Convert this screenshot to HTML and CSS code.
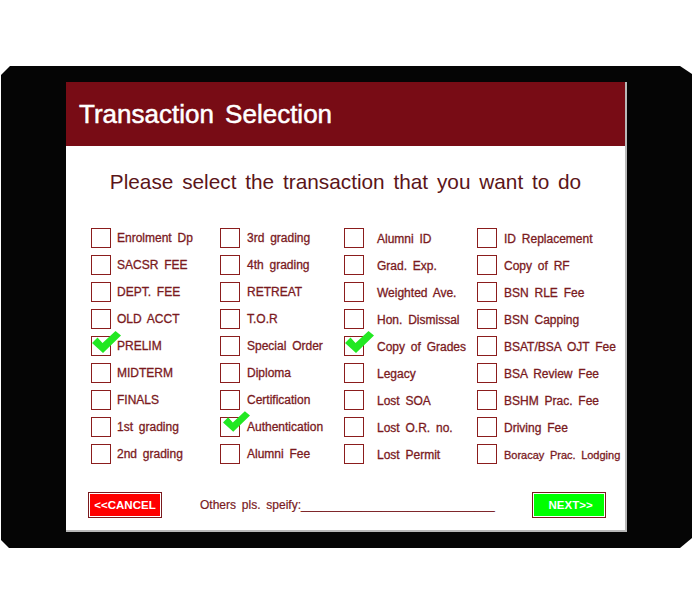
FILE: index.html
```html
<!DOCTYPE html>
<html>
<head>
<meta charset="utf-8">
<link rel="stylesheet" href="styles.css">
</head>
<body>
<div class="frame">
  <div class="panel">
    <div class="header"><h1 class="title">Transaction Selection</h1></div>
    <p class="subtitle">Please select the transaction that you want to do</p>
    <div class="grid">
      <div class="col col1">
        <div class="item"><span class="box"></span><span class="label">Enrolment Dp</span></div>
        <div class="item"><span class="box"></span><span class="label">SACSR FEE</span></div>
        <div class="item"><span class="box"></span><span class="label">DEPT. FEE</span></div>
        <div class="item"><span class="box"></span><span class="label">OLD ACCT</span></div>
        <div class="item"><span class="box checked"><svg class="check" viewBox="0 0 29 22"><polygon points="0,12 5.5,6.5 10.5,12 23.5,0 29,4.5 11,22"/></svg></span><span class="label">PRELIM</span></div>
        <div class="item"><span class="box"></span><span class="label">MIDTERM</span></div>
        <div class="item"><span class="box"></span><span class="label">FINALS</span></div>
        <div class="item"><span class="box"></span><span class="label">1st grading</span></div>
        <div class="item"><span class="box"></span><span class="label">2nd grading</span></div>
      </div>
      <div class="col col2">
        <div class="item"><span class="box"></span><span class="label">3rd grading</span></div>
        <div class="item"><span class="box"></span><span class="label">4th grading</span></div>
        <div class="item"><span class="box"></span><span class="label">RETREAT</span></div>
        <div class="item"><span class="box"></span><span class="label">T.O.R</span></div>
        <div class="item"><span class="box"></span><span class="label">Special Order</span></div>
        <div class="item"><span class="box"></span><span class="label">Diploma</span></div>
        <div class="item"><span class="box"></span><span class="label">Certification</span></div>
        <div class="item"><span class="box checked"><svg class="check check-alt" viewBox="0 0 29 22"><polygon points="0,12 5.5,6.5 10.5,12 23.5,0 29,4.5 11,22"/></svg></span><span class="label">Authentication</span></div>
        <div class="item"><span class="box"></span><span class="label">Alumni Fee</span></div>
      </div>
      <div class="col col3">
        <div class="item"><span class="box"></span><span class="label">Alumni ID</span></div>
        <div class="item"><span class="box"></span><span class="label">Grad. Exp.</span></div>
        <div class="item"><span class="box"></span><span class="label">Weighted Ave.</span></div>
        <div class="item"><span class="box"></span><span class="label">Hon. Dismissal</span></div>
        <div class="item"><span class="box checked"><svg class="check" viewBox="0 0 29 22"><polygon points="0,12 5.5,6.5 10.5,12 23.5,0 29,4.5 11,22"/></svg></span><span class="label">Copy of Grades</span></div>
        <div class="item"><span class="box"></span><span class="label">Legacy</span></div>
        <div class="item"><span class="box"></span><span class="label">Lost SOA</span></div>
        <div class="item"><span class="box"></span><span class="label">Lost O.R. no.</span></div>
        <div class="item"><span class="box"></span><span class="label">Lost Permit</span></div>
      </div>
      <div class="col col4">
        <div class="item"><span class="box"></span><span class="label">ID Replacement</span></div>
        <div class="item"><span class="box"></span><span class="label">Copy of RF</span></div>
        <div class="item"><span class="box"></span><span class="label">BSN RLE Fee</span></div>
        <div class="item"><span class="box"></span><span class="label">BSN Capping</span></div>
        <div class="item"><span class="box"></span><span class="label">BSAT/BSA OJT Fee</span></div>
        <div class="item"><span class="box"></span><span class="label">BSA Review Fee</span></div>
        <div class="item"><span class="box"></span><span class="label">BSHM Prac. Fee</span></div>
        <div class="item"><span class="box"></span><span class="label">Driving Fee</span></div>
        <div class="item"><span class="box"></span><span class="label small">Boracay Prac. Lodging</span></div>
      </div>
    </div>
    <div class="footer">
      <button class="btn btn-cancel">&lt;&lt;CANCEL</button>
      <span class="others">Others pls. speify:_____________________________</span>
      <button class="btn btn-next">NEXT&gt;&gt;</button>
    </div>
  </div>
</div>
</body>
</html>
```
FILE: styles.css
```css
* { box-sizing: border-box; }
html, body { margin: 0; padding: 0; background: #ffffff; }
body { font-family: "Liberation Sans", Arial, sans-serif; }

.frame {
  margin-top: 66px;
  margin-left: 1px;
  width: 691px;
  height: 482px;
  background: #050505;
  padding: 16px 64px 16px 65px;
  clip-path: polygon(9px 0, calc(100% - 12px) 0, 100% 8px, 100% calc(100% - 10px), calc(100% - 12px) 100%, 8px 100%, 0 calc(100% - 8px), 0 9px);
}

.panel {
  width: 561px;
  height: 450px;
  background: #ffffff;
  border-right: 2px solid #b8b8b8;
  border-bottom: 2px solid #b8b8b8;
  display: flex;
  flex-direction: column;
}

.header {
  height: 64px;
  background: #780c15;
  display: flex;
  align-items: center;
  padding-left: 13px;
  flex-shrink: 0;
}
.title {
  margin: 0;
  color: #ffffff;
  font-size: 26px;
  font-weight: normal;
  word-spacing: 4px;
  -webkit-text-stroke: 0.5px #ffffff;
  line-height: 30px;
}

.subtitle {
  margin: 24px 0 0 0;
  text-align: center;
  color: #5b1519;
  font-size: 20.8px;
  word-spacing: 3px;
  line-height: 24px;
  height: 24px;
}

.grid {
  display: flex;
  margin-top: 30px;
  padding-left: 25px;
}
.col { display: flex; flex-direction: column; }
.col1 { width: 129px; }
.col2 { width: 124px; }
.col3 { width: 133px; }
.col4 { flex: 1; }

.item {
  height: 27px;
  display: flex;
  align-items: center;
}
.box {
  position: relative;
  width: 20px;
  height: 20px;
  border: 1.6px solid #8b1d1d;
  flex-shrink: 0;
}
.label {
  color: #7a1a1e;
  font-size: 12px;
  word-spacing: 2.5px;
  white-space: nowrap;
  margin-left: 6px;
  -webkit-text-stroke: 0.3px #7a1a1e;
}
.col2 .label { margin-left: 7px; }
.col3 .label { margin-left: 13px; padding-top: 2px; }
.col4 .label { margin-left: 7px; padding-top: 2px; }
.label.small { font-size: 11px; }

.check {
  position: absolute;
  left: 0px;
  top: -6px;
  width: 29px;
  height: 22px;
  fill: #22e822;
}
.check-alt { left: 2px; top: -7px; width: 27px; height: 21px; }

.footer {
  display: flex;
  align-items: center;
  margin-top: 25px;
  padding-left: 22px;
}
.btn {
  width: 74px;
  height: 26px;
  border: 1px solid #7a1a1e;
  box-shadow: inset 0 0 0 1px #ffffff;
  color: #ffffff;
  font-family: "Liberation Sans", Arial, sans-serif;
  font-weight: bold;
  font-size: 11.5px;
  padding: 0;
  margin: 0;
}
.btn-cancel { background: #ff0000; }
.btn-next { background: #00ff00; margin-left: 37px; padding-left: 4px; }
.others {
  margin-left: 38px;
  color: #7a1a1e;
  font-size: 12px;
  word-spacing: 2.5px;
  white-space: nowrap;
  -webkit-text-stroke: 0.2px #7a1a1e;
}
```
